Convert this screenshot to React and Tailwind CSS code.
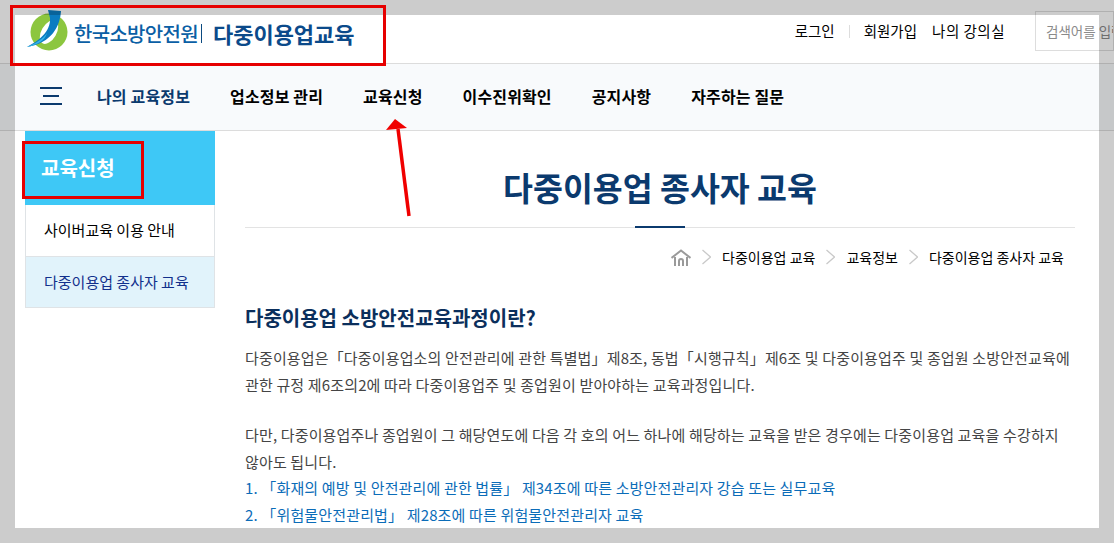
const font = { fontFamily: '"Noto Sans CJK KR", "Noto Sans", sans-serif' };

const navItems = ["업소정보 관리", "교육신청", "이수진위확인", "공지사항", "자주하는 질문"];

function Chevron() {
  return (
    <svg width="9" height="16" viewBox="0 0 9 16" fill="none" stroke="#c9c9c9" strokeWidth="1.3" className="shrink-0">
      <polyline points="0.5,1 8.5,8 0.5,15" />
    </svg>
  );
}

function HomeIcon() {
  return (
    <svg width="20" height="17" viewBox="0 0 20 17" fill="none" stroke="#9a9a9a" strokeWidth="2" className="shrink-0">
      <polyline points="0.5,9 10,1.5 19.5,9" />
      <path d="M4 8v9M16 8v9" />
      <path d="M8 17v-5a2 2 0 0 1 4 0v5" />
    </svg>
  );
}

function Logo() {
  return (
    <svg width="42" height="42" viewBox="0 0 42 42" className="-mt-[6px] shrink-0">
      <circle cx="23" cy="22" r="18.5" fill="#8cc63f" />
      <ellipse cx="23" cy="22" rx="7.5" ry="13" fill="#fff" transform="rotate(30 23 22)" />
      <path d="M22 0 L35 1 C34 16 26 33 1 37 C12 31 25 22 24 8 Z" fill="#0a7cc1" />
      <path d="M1 37 C10 33 17 29 21 23 C19 31 11 35 1 37 Z" fill="#35b3e8" />
    </svg>
  );
}

export default function App() {
  return (
    <div className="relative h-[543px] w-[1114px] overflow-hidden bg-white text-black" style={font}>
      {/* top bar */}
      <header className="flex h-[64px] items-center justify-between border-b border-[#dcdcdc] pl-[26px]">
        <div className="flex items-center pt-[4px]">
          <Logo />
          <span className="ml-[6px] text-[20px] font-medium tracking-[-0.7px] text-[#0b5fa5]">한국소방안전원</span>
          <span className="ml-[3px] h-[19px] w-px bg-[#0b4a80]" />
          <span className="ml-[11px] text-[22px] font-bold text-[#0b4a8a]">다중이용업교육</span>
        </div>
        <div className="flex items-center self-start pt-[11px]">
          <span className="text-[14.5px] leading-[40px]">로그인</span>
          <span className="mx-[14px] h-[13px] w-px bg-[#dddddd]" />
          <span className="text-[14.5px] leading-[40px]">회원가입</span>
          <span className="ml-[15px] text-[14.5px] tracking-[0.5px] leading-[40px]">나의 강의실</span>
          <div className="ml-[30px] flex h-[40px] w-[79px] items-center overflow-hidden border border-[#dddddd] pl-[10px] text-[13.5px] whitespace-nowrap text-[#8a8a8a]">
            검색어를 입력하세요
          </div>
        </div>
      </header>

      {/* main nav */}
      <nav className="flex h-[67px] items-center border-b border-[#dcdcdc] bg-[#f8fafc] pl-[40px] pb-[2px]">
        <div className="flex h-[18px] w-[22px] flex-col justify-between">
          <span className="h-[2px] w-[22px] bg-[#0b3a6e]" />
          <span className="h-[2px] w-[16px] self-center bg-[#0b3a6e]" />
          <span className="h-[2px] w-[22px] bg-[#0b3a6e]" />
        </div>
        <span className="ml-[35px] text-[16px] tracking-[0.15px] font-bold text-[#0b3a6e]">나의 교육정보</span>
        {navItems.map((item) => (
          <span key={item} className="ml-[40px] text-[16px] tracking-[0.15px] font-bold">
            {item}
          </span>
        ))}
      </nav>

      <div className="flex pl-[25px]">
        {/* side menu */}
        <aside className="w-[190px] shrink-0">
          <div className="flex h-[74px] items-center bg-[#3ec8f6] pl-[16px] text-[20px] font-bold text-white">교육신청</div>
          <div className="flex h-[52px] items-center border-x border-b border-[#dfe3e6] pl-[18px] text-[15px]">사이버교육 이용 안내</div>
          <div className="flex h-[51px] items-center border-x border-b border-[#dfe3e6] bg-[#e1f3fb] pl-[18px] text-[15px] text-[#12308c]">다중이용업 종사자 교육</div>
        </aside>

        {/* content */}
        <main className="ml-[30px] w-[830px] shrink-0">
          <div className="relative flex h-[97px] items-center justify-center border-b border-[#e3e3e3] pt-[17px]">
            <h1 className="text-[32.5px] font-bold text-[#0b3a6e]">다중이용업 종사자 교육</h1>
            <span className="absolute bottom-[-1px] left-[390px] h-[2px] w-[50px] bg-[#0b3a6e]" />
          </div>
          <div className="flex h-[58px] items-center justify-end gap-[11px] pr-[11px] text-[14px]">
            <HomeIcon />
            <Chevron />
            <span>다중이용업 교육</span>
            <Chevron />
            <span>교육정보</span>
            <Chevron />
            <span>다중이용업 종사자 교육</span>
          </div>
          <h2 className="mt-[16px] text-[20px] leading-[32px] font-bold text-[#0b2f5c]">다중이용업 소방안전교육과정이란?</h2>
          <div className="mt-[11px] text-[15px] leading-[26.5px] tracking-[0.15px] text-[#444444]">
            <p>다중이용업은「다중이용업소의 안전관리에 관한 특별법」제8조, 동법「시행규칙」제6조 및 다중이용업주 및 종업원 소방안전교육에</p>
            <p>관한 규정 제6조의2에 따라 다중이용업주 및 종업원이 받아야하는 교육과정입니다.</p>
            <p className="mt-[24px]">다만, 다중이용업주나 종업원이 그 해당연도에 다음 각 호의 어느 하나에 해당하는 교육을 받은 경우에는 다중이용업 교육을 수강하지</p>
            <p>않아도 됩니다.</p>
            <p className="text-[#0b6cb8]">1. 「화재의 예방 및 안전관리에 관한 법률」 제34조에 따른 소방안전관리자 강습 또는 실무교육</p>
            <p className="text-[#0b6cb8]">2. 「위험물안전관리법」 제28조에 따른 위험물안전관리자 교육</p>
          </div>
        </main>
      </div>

      {/* screenshot frame and red annotations, laid over the page */}
      <div className="pointer-events-none absolute inset-0 border-[15px] border-black/20" />
      <div className="pointer-events-none absolute top-[5px] left-[10px] h-[61px] w-[376px] border-[3px] border-[#e60000]" />
      <div className="pointer-events-none absolute top-[141px] left-[22px] h-[58px] w-[122px] border-[3px] border-[#e60000]" />
      <svg className="pointer-events-none absolute top-[116px] left-[384px]" width="28" height="102" viewBox="0 0 28 102" fill="#f00000">
        <path d="M25 100 L14 13" stroke="#f00000" strokeWidth="3.5" />
        <polygon points="11,3 2,14 23,12" />
      </svg>
    </div>
  );
}
